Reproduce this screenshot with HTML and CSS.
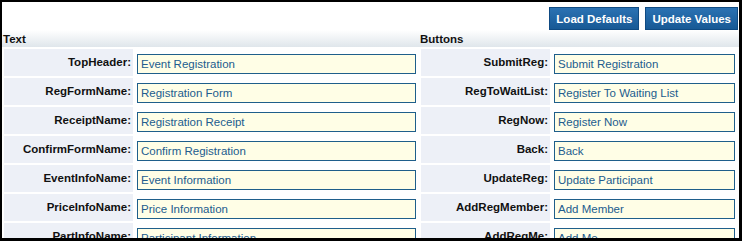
FILE: index.html
```html
<!DOCTYPE html>
<html lang="en">
<head>
  <meta charset="UTF-8">
  <title>Label Settings</title>
  <link rel="stylesheet" href="styles.css">
</head>
<body>
  <div class="frame">
    <div class="toolbar">
      <button class="btn">Load Defaults</button>
      <button class="btn">Update Values</button>
    </div>
    <div class="section-head">
      <span class="head-text">Text</span>
      <span class="head-buttons">Buttons</span>
    </div>
    <table class="settings">
      <tr>
        <td class="lbl">TopHeader:</td>
        <td class="val left"><input type="text" value="Event Registration"></td>
        <td class="lbl">SubmitReg:</td>
        <td class="val"><input type="text" value="Submit Registration"></td>
      </tr>
      <tr>
        <td class="lbl">RegFormName:</td>
        <td class="val left"><input type="text" value="Registration Form"></td>
        <td class="lbl">RegToWaitList:</td>
        <td class="val"><input type="text" value="Register To Waiting List"></td>
      </tr>
      <tr>
        <td class="lbl">ReceiptName:</td>
        <td class="val left"><input type="text" value="Registration Receipt"></td>
        <td class="lbl">RegNow:</td>
        <td class="val"><input type="text" value="Register Now"></td>
      </tr>
      <tr>
        <td class="lbl">ConfirmFormName:</td>
        <td class="val left"><input type="text" value="Confirm Registration"></td>
        <td class="lbl">Back:</td>
        <td class="val"><input type="text" value="Back"></td>
      </tr>
      <tr>
        <td class="lbl">EventInfoName:</td>
        <td class="val left"><input type="text" value="Event Information"></td>
        <td class="lbl">UpdateReg:</td>
        <td class="val"><input type="text" value="Update Participant"></td>
      </tr>
      <tr>
        <td class="lbl">PriceInfoName:</td>
        <td class="val left"><input type="text" value="Price Information"></td>
        <td class="lbl">AddRegMember:</td>
        <td class="val"><input type="text" value="Add Member"></td>
      </tr>
      <tr>
        <td class="lbl">PartInfoName:</td>
        <td class="val left"><input type="text" value="Participant Information"></td>
        <td class="lbl">AddRegMe:</td>
        <td class="val"><input type="text" value="Add Me"></td>
      </tr>
    </table>
  </div>
</body>
</html>
```

FILE: styles.css
```css
body {
  margin: 0;
  font-family: "Liberation Sans", Arial, sans-serif;
  font-size: 11px;
  color: #1a1a1a;
  background-color: #fff;
}
.frame {
  box-sizing: border-box;
  width: 742px;
  height: 241px;
  border-style: solid;
  border-color: #000;
  border-width: 2px 3px 3px 2px;
  overflow: hidden;
  background-color: #fff;
}
.toolbar {
  display: flex;
  justify-content: flex-end;
  gap: 6px;
  height: 28px;
  padding: 5px 1px 0 0;
  box-sizing: border-box;
}
.btn {
  height: 23px;
  padding: 0 6px;
  border: 1px solid #0f4a82;
  background: linear-gradient(#2b72b3, #175995);
  color: #fff;
  font-family: "Liberation Sans", Arial, sans-serif;
  font-size: 11.5px;
  font-weight: bold;
  cursor: pointer;
}
.section-head {
  display: flex;
  height: 17px;
  align-items: flex-end;
  padding-bottom: 2px;
  box-sizing: border-box;
  background: linear-gradient(#ffffff, #dfe6eb);
  font-size: 11.5px;
  font-weight: bold;
  color: #111;
}
.head-text {
  width: 417px;
  padding-left: 1px;
}
.settings {
  border-spacing: 2px;
  table-layout: fixed;
  width: 737px;
}
.settings td {
  padding: 0;
  height: 27px;
  box-sizing: border-box;
}
.settings .lbl {
  width: 129px;
  padding-right: 2px;
  padding-bottom: 1px;
  text-align: right;
  font-size: 11.5px;
  font-weight: bold;
  color: #111;
  background-color: #edf0f7;
}
.settings .val {
  padding: 2px 2px 0 2px;
}
.settings .val.left {
  width: 284px;
}
.settings input {
  display: block;
  box-sizing: border-box;
  width: 100%;
  height: 20px;
  margin: 0;
  padding: 1px 3px 0;
  border: 1px solid #1f5f8b;
  background-color: #fffee6;
  color: #225c8e;
  font-family: "Liberation Sans", Arial, sans-serif;
  font-size: 11.5px;
}
.settings .val.left input {
  width: 279px;
}
```
